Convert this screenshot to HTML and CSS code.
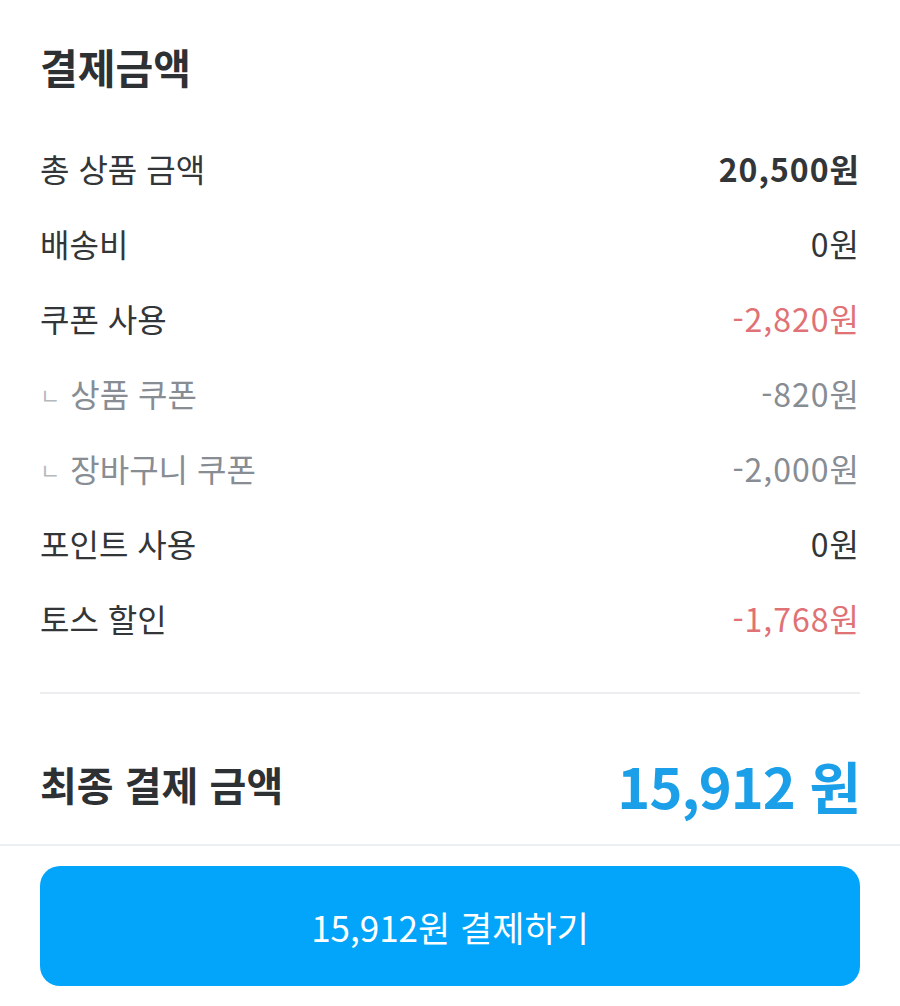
FILE: index.html
```html
<!DOCTYPE html>
<html lang="ko">
<head>
  <meta charset="UTF-8">
  <title>결제금액</title>
  <link rel="stylesheet" href="styles.css">
</head>
<body>
  <div class="summary">
    <h1>결제금액</h1>
    <ul class="rows">
      <li class="row"><span>총 상품 금액</span><span class="price strong">20,500원</span></li>
      <li class="row"><span>배송비</span><span class="price">0원</span></li>
      <li class="row"><span>쿠폰 사용</span><span class="price minus">-2,820원</span></li>
      <li class="row sub"><span><i class="branch">ㄴ</i>상품 쿠폰</span><span class="price">-820원</span></li>
      <li class="row sub"><span><i class="branch">ㄴ</i>장바구니 쿠폰</span><span class="price">-2,000원</span></li>
      <li class="row"><span>포인트 사용</span><span class="price">0원</span></li>
      <li class="row"><span>토스 할인</span><span class="price minus">-1,768원</span></li>
    </ul>
    <div class="total">
      <span class="total-label">최종 결제 금액</span>
      <span class="total-price">15,912 원</span>
    </div>
  </div>
  <div class="footer">
    <button type="button" class="pay">15,912원 결제하기</button>
  </div>
</body>
</html>
```

FILE: styles.css
```css
body { margin: 0; background: #fff; font-family: "Noto Sans CJK KR", "Noto Sans", sans-serif; color: #333638; }
.summary { padding: 38px 40px 0; }
h1 { margin: 0; font-size: 41px; font-weight: 700; line-height: 56px; color: #2e3133; }
.rows { list-style: none; margin: 36px 0 0; padding: 0 0 37px; border-bottom: 2px solid #ebedef; }
.row { display: flex; justify-content: space-between; align-items: center; height: 75px; font-size: 32px; }
.price { letter-spacing: 1px; }
.strong { font-weight: 700; }
.minus { color: #e07275; }
.sub { color: #878d93; }
.branch { font-style: normal; font-size: 22px; color: #b4b9be; margin-right: 10px; position: relative; top: -3px; }
.total { display: flex; justify-content: space-between; align-items: center; height: 150px; box-sizing: border-box; padding-top: 30px; }
.total-label { font-size: 40px; font-weight: 700; color: #2e3133; }
.total-price { font-size: 56px; font-weight: 700; color: #1a9fe8; letter-spacing: -1px; }
.footer { border-top: 2px solid #edf0f2; padding: 20px 40px; }
.pay { display: block; width: 100%; height: 120px; border: none; border-radius: 20px; background: #03a5fb; color: #fff; font-family: inherit; font-size: 35px; cursor: pointer; }
```
